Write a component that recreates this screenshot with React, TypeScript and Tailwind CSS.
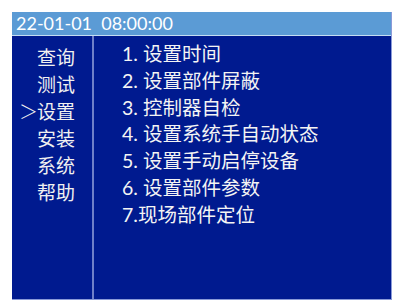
import React from "react";

const left = ["查询", "测试", "设置", "安装", "系统", "帮助"];
const right = [
  "1. 设置时间",
  "2. 设置部件屏蔽",
  "3. 控制器自检",
  "4. 设置系统手自动状态",
  "5. 设置手动启停设备",
  "6. 设置部件参数",
  "7.现场部件定位",
];

export default function App() {
  const font = { fontFamily: '"Lato", "Noto Sans CJK SC", sans-serif' };
  return (
    <div className="w-[404px] h-[305px] bg-white pt-[12px] pl-[12px]" style={font}>
      <div className="w-[380px] h-[288px] flex flex-col border-r border-b border-[#8a9ad8]">
        <div className="h-[24px] bg-[#5b9bd5] border-b border-[#c4dcf2] text-white text-[18px] leading-[23px] pl-[4px] whitespace-pre">
          22-01-01  08:00:00
        </div>
        <div className="flex-1 flex bg-[#001a8f] text-white">
          <div className="w-[82px] pt-[8px] pl-[7px] border-r-2 border-[#6f80c8]">
            {left.map((t, i) => (
              <div key={t} className="flex text-[19px] leading-[27px] text-[#f0f0f0]">
                <span className="w-[18px] font-light">{i === 2 ? "＞" : ""}</span>
                <span>{t}</span>
              </div>
            ))}
          </div>
          <div className="flex-1 pt-[5px] pl-[28px]">
            {right.map((t) => (
              <div key={t} className="text-[19.5px] leading-[26.8px] whitespace-pre text-[#f4f4f4]">
                {t}
              </div>
            ))}
          </div>
        </div>
      </div>
    </div>
  );
}
